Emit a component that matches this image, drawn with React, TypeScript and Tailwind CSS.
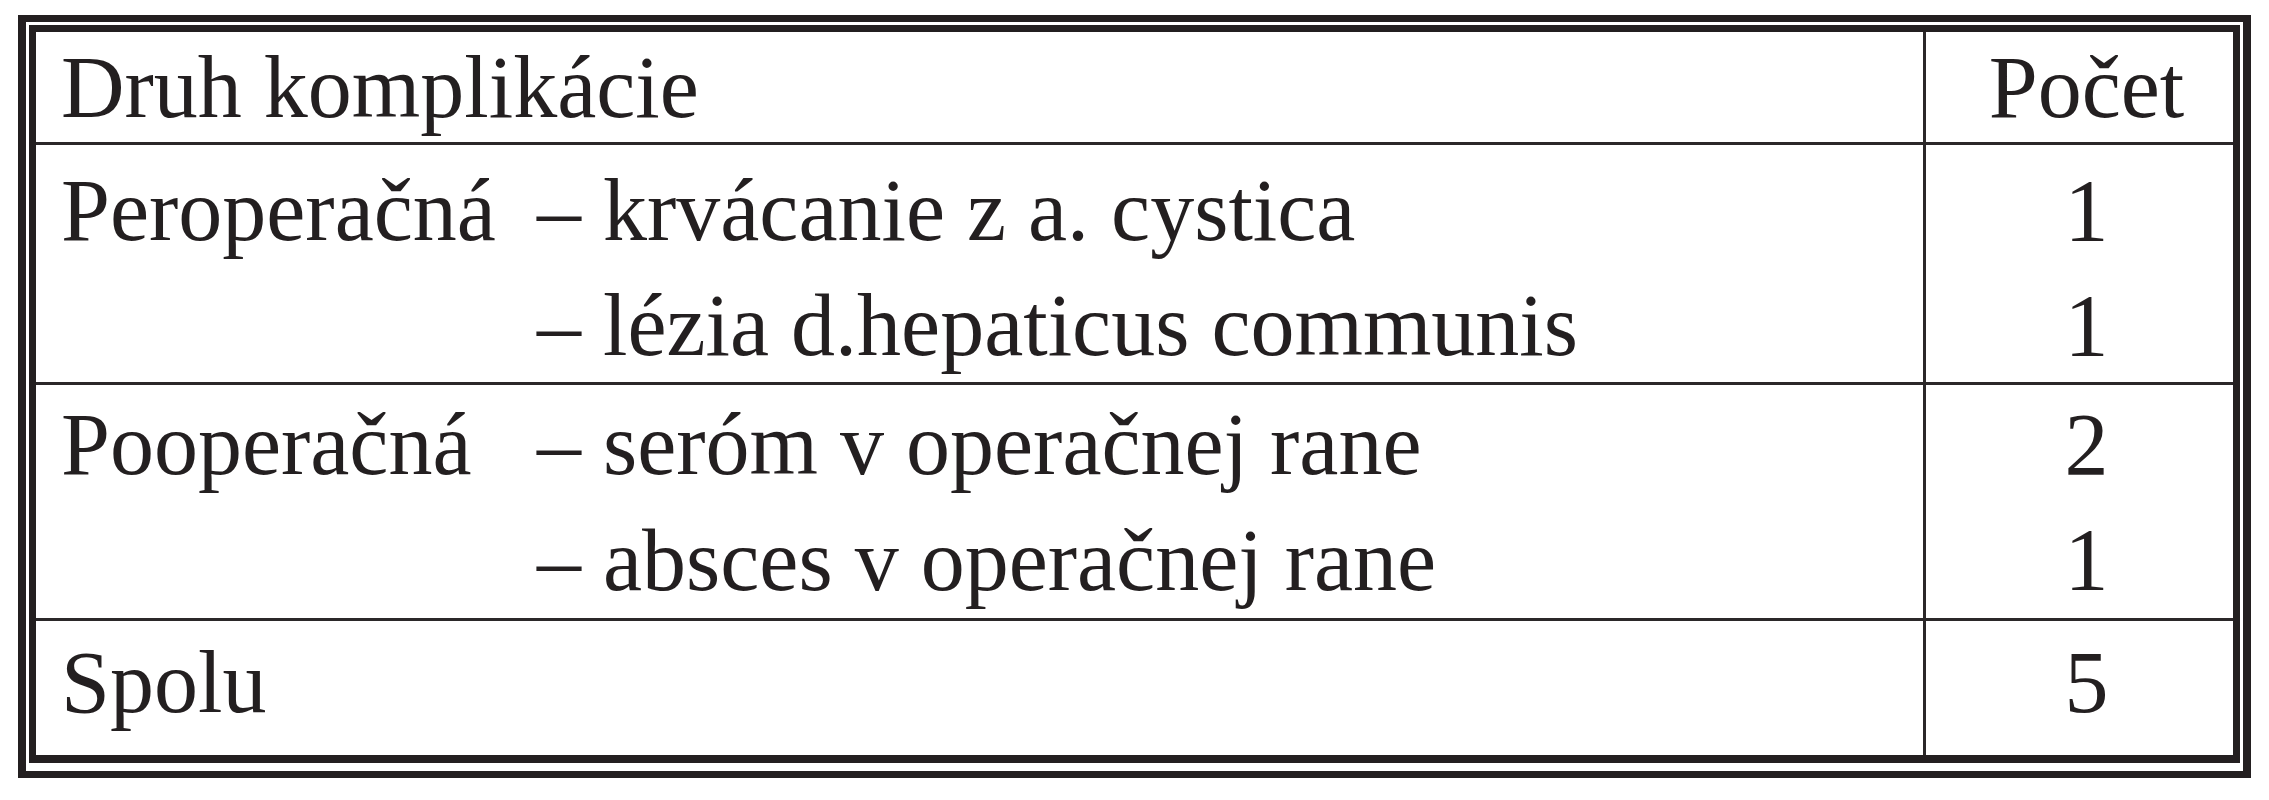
const sections = [
  {
    label: 'Peroperačná',
    pad: 'pt-[8px]',
    height: 'h-[237px]',
    items: [
      { text: '– krvácanie z a. cystica', count: 1 },
      { text: '– lézia d.hepaticus communis', count: 1 },
    ],
  },
  {
    label: 'Pooperačná',
    pad: 'pt-[2px]',
    height: 'h-[233px]',
    items: [
      { text: '– seróm v operačnej rane', count: 2 },
      { text: '– absces v operačnej rane', count: 1 },
    ],
  },
];

function Divider() {
  return <div className="h-[3px] w-full shrink-0 bg-[#2b2829]" />;
}

export default function App() {
  return (
    <div className="w-[2269px] h-[800px] bg-white pt-[15px] pl-[18px] font-['Liberation_Serif',serif] text-[#231f20] text-[88px] leading-[115px]">
      {/* double frame */}
      <div className="w-[2233px] h-[763px] border-[#231f20] border-t-[7px] border-b-[7px] border-x-[8px] pt-[3px] px-[3px] pb-[8px]">
        <div className="h-full border-[#231f20] border-x-[7px] border-t-[7px] border-b-[8px] flex flex-col">
          {/* header */}
          <div className="grid grid-cols-[1fr_310px] h-[110px] shrink-0 leading-[110px]">
            <div className="pl-[25px] pt-[1px]">Druh komplikácie</div>
            <div className="border-l-[3px] border-[#2b2829] text-center pl-[14px] pt-[1px]">Počet</div>
          </div>
          <Divider />

          {sections.map(s => (
            <div key={s.label} className="contents">
              <div className={`grid grid-cols-[1fr_310px] shrink-0 ${s.height}`}>
                <div className={`pl-[25px] ${s.pad} grid grid-cols-[476px_1fr]`}>
                  {s.items.map((it, i) => (
                    <div key={it.text} className="contents">
                      <div className="whitespace-nowrap">{i === 0 ? s.label : ''}</div>
                      <div className="whitespace-nowrap">{it.text}</div>
                    </div>
                  ))}
                </div>
                <div className={`border-l-[3px] border-[#2b2829] text-center pl-[14px] ${s.pad}`}>
                  {s.items.map(it => (
                    <div key={it.text}>{it.count}</div>
                  ))}
                </div>
              </div>
              <Divider />
            </div>
          ))}

          {/* total */}
          <div className="grid grid-cols-[1fr_310px] flex-1">
            <div className="pl-[25px] pt-[4px]">Spolu</div>
            <div className="border-l-[3px] border-[#2b2829] text-center pl-[14px] pt-[4px]">5</div>
          </div>
        </div>
      </div>
    </div>
  );
}
